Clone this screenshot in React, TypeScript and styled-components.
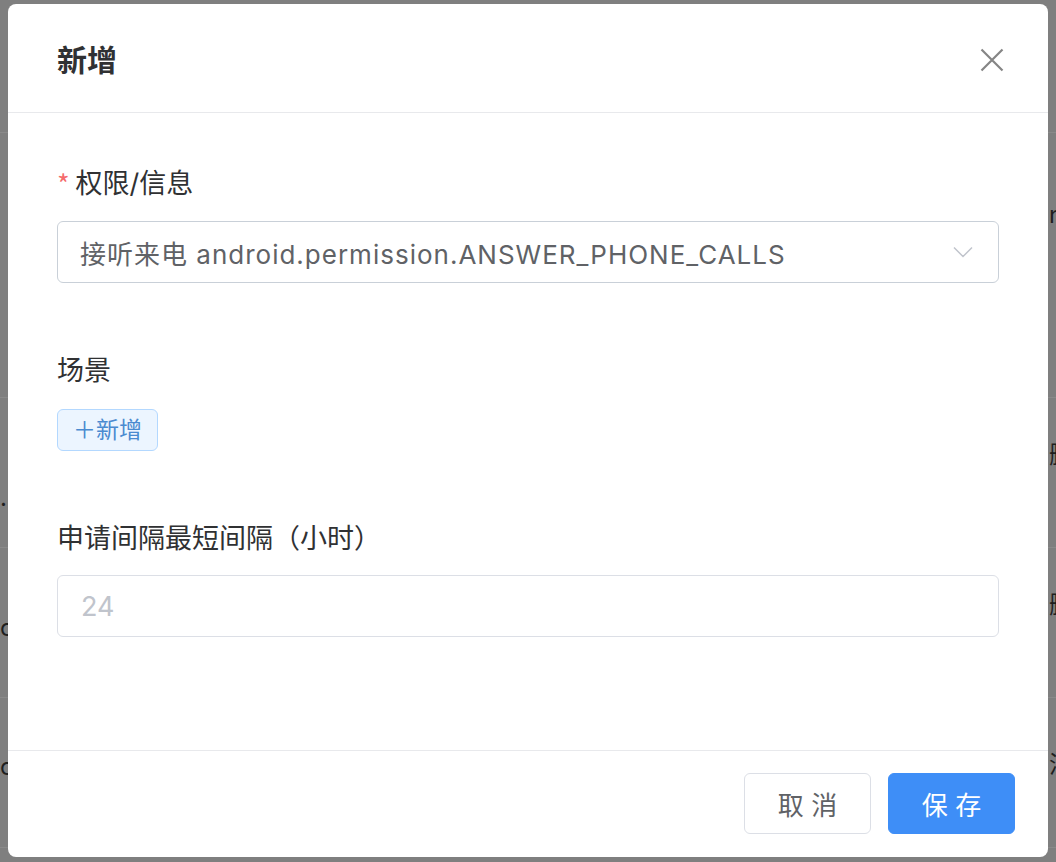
import React from "react";
import styled, { createGlobalStyle } from "styled-components";

const GlobalStyle = createGlobalStyle`
  html, body { margin: 0; padding: 0; }
  body {
    background: #7f7f7f;
    font-family: "Inter", "Noto Sans CJK SC", sans-serif;
  }
  * { box-sizing: border-box; }
`;

const Screen = styled.div`
  position: relative;
  width: 1056px;
  height: 862px;
  overflow: hidden;
  background: #7f7f7f;
`;

/* ---------- dimmed page behind the dialog ---------- */
const BgTable = styled.div`
  display: flex;
  flex-direction: column;
`;

const BgRow = styled.div<{ $h: number }>`
  height: ${(p) => p.$h}px;
  flex: none;
  display: flex;
  border-bottom: 1px solid #8a8a8a;
`;

const BgCell = styled.div<{ $pad: number; $w?: number }>`
  ${(p) => (p.$w ? `width: ${p.$w}px; flex: none;` : "flex: 1;")}
  padding-top: ${(p) => p.$pad}px;
  font-size: 24px;
  line-height: 24px;
  color: #1e1e1e;
  white-space: nowrap;
  overflow: hidden;
`;

/* ---------- dialog ---------- */
const Dialog = styled.div`
  position: absolute;
  left: 8px;
  top: 4px;
  width: 1040px;
  height: 853px;
  background: #ffffff;
  border-radius: 8px;
  display: flex;
  flex-direction: column;
  overflow: hidden;
`;

const Header = styled.div`
  height: 109px;
  flex: none;
  display: flex;
  align-items: center;
  justify-content: space-between;
  padding: 4px 44px 0 49px;
  border-bottom: 1px solid #e8e9ec;
`;

const Title = styled.div`
  font-size: 30px;
  line-height: 40px;
  font-weight: 600;
  color: #303133;
`;

const CloseButton = styled.button`
  width: 24px;
  height: 24px;
  padding: 0;
  border: none;
  background: transparent;
  display: flex;
  align-items: center;
  justify-content: center;
  cursor: pointer;
`;

const Body = styled.div`
  flex: 1;
  padding: 47px 49px 0;
  display: flex;
  flex-direction: column;
`;

const FormItem = styled.div`
  display: flex;
  flex-direction: column;
  align-items: flex-start;
  margin-bottom: 64px;
`;

const Label = styled.div<{ $gap: number }>`
  font-size: 27px;
  line-height: 48px;
  color: #303133;
  margin-bottom: ${(p) => p.$gap}px;
  display: flex;
  align-items: center;
`;

const Required = styled.span`
  color: #f56c6c;
  font-family: "Noto Sans CJK SC", sans-serif;
  font-size: 27px;
  margin-right: 6px;
`;

const SelectBox = styled.div`
  width: 100%;
  height: 62px;
  border: 1px solid #c9d0d8;
  border-radius: 6px;
  padding: 0 25px 0 22px;
  display: flex;
  align-items: center;
  justify-content: space-between;
  font-size: 26px;
  letter-spacing: 1px;
  color: #606266;
`;

const TextInput = styled.input`
  width: 100%;
  height: 62px;
  border: 1px solid #dcdfe6;
  border-radius: 6px;
  padding: 0 23px;
  font-family: "Inter", "Noto Sans CJK SC", sans-serif;
  font-size: 27px;
  color: #606266;
  outline: none;
  &::placeholder { color: #c0c4cc; }
`;

const AddTag = styled.button`
  height: 42px;
  padding: 0 15px;
  background: #ecf5ff;
  border: 1px solid #b3d8ff;
  border-radius: 6px;
  color: #4a8ad0;
  font-family: "Inter", "Noto Sans CJK SC", sans-serif;
  font-size: 23px;
  line-height: 1;
  display: flex;
  align-items: center;
  cursor: pointer;
`;

const Footer = styled.div`
  flex: none;
  border-top: 1px solid #e8e9ec;
  padding: 22px 33px 23px;
  display: flex;
  justify-content: flex-end;
  gap: 17px;
`;

const Button = styled.button<{ $primary?: boolean }>`
  width: 127px;
  height: 61px;
  border-radius: 6px;
  font-family: "Inter", "Noto Sans CJK SC", sans-serif;
  font-size: 26px;
  white-space: pre;
  cursor: pointer;
  border: 1px solid ${(p) => (p.$primary ? "#3e8ef7" : "#dcdfe6")};
  background: ${(p) => (p.$primary ? "#3e8ef7" : "#ffffff")};
  color: ${(p) => (p.$primary ? "#ffffff" : "#606266")};
`;

const CloseIcon = () => (
  <svg width="24" height="24" viewBox="0 0 24 24">
    <path d="M1.5 1.5 L22.5 22.5 M22.5 1.5 L1.5 22.5" stroke="#858585" strokeWidth="2.2" fill="none" />
  </svg>
);

const ChevronIcon = () => (
  <svg width="20" height="12" viewBox="0 0 20 12">
    <path d="M1 1.5 L10 10.5 L19 1.5" stroke="#c0c4cc" strokeWidth="1.5" fill="none" />
  </svg>
);

const bgRows = [
  { h: 133, l: "", lp: 0, r: "", rp: 0 },
  { h: 265, l: "", lp: 0, r: "n", rp: 70 },
  { h: 150, l: "...", lp: 88, r: "删", rp: 45 },
  { h: 150, l: "o", lp: 68, r: "删", rp: 45 },
  { h: 150, l: "o", lp: 57, r: "消", rp: 55 },
  { h: 40, l: "", lp: 0, r: "", rp: 0 },
];

export default function App() {
  return (
    <>
      <GlobalStyle />
      <Screen>
        <BgTable>
          {bgRows.map((row, i) => (
            <BgRow key={i} $h={row.h}>
              <BgCell $w={1049} $pad={row.lp}>{row.l}</BgCell>
              <BgCell $pad={row.rp}>{row.r}</BgCell>
            </BgRow>
          ))}
        </BgTable>

        <Dialog>
          <Header>
            <Title>新增</Title>
            <CloseButton aria-label="关闭">
              <CloseIcon />
            </CloseButton>
          </Header>

          <Body>
            <FormItem>
              <Label $gap={13}>
                <Required>*</Required>权限/信息
              </Label>
              <SelectBox>
                <span>接听来电 android.permission.ANSWER_PHONE_CALLS</span>
                <ChevronIcon />
              </SelectBox>
            </FormItem>

            <FormItem>
              <Label $gap={14}>场景</Label>
              <AddTag>＋新增</AddTag>
            </FormItem>

            <FormItem>
              <Label $gap={12}>申请间隔最短间隔（小时）</Label>
              <TextInput placeholder="24" />
            </FormItem>
          </Body>

          <Footer>
            <Button>取 消</Button>
            <Button $primary>保 存</Button>
          </Footer>
        </Dialog>
      </Screen>
    </>
  );
}
